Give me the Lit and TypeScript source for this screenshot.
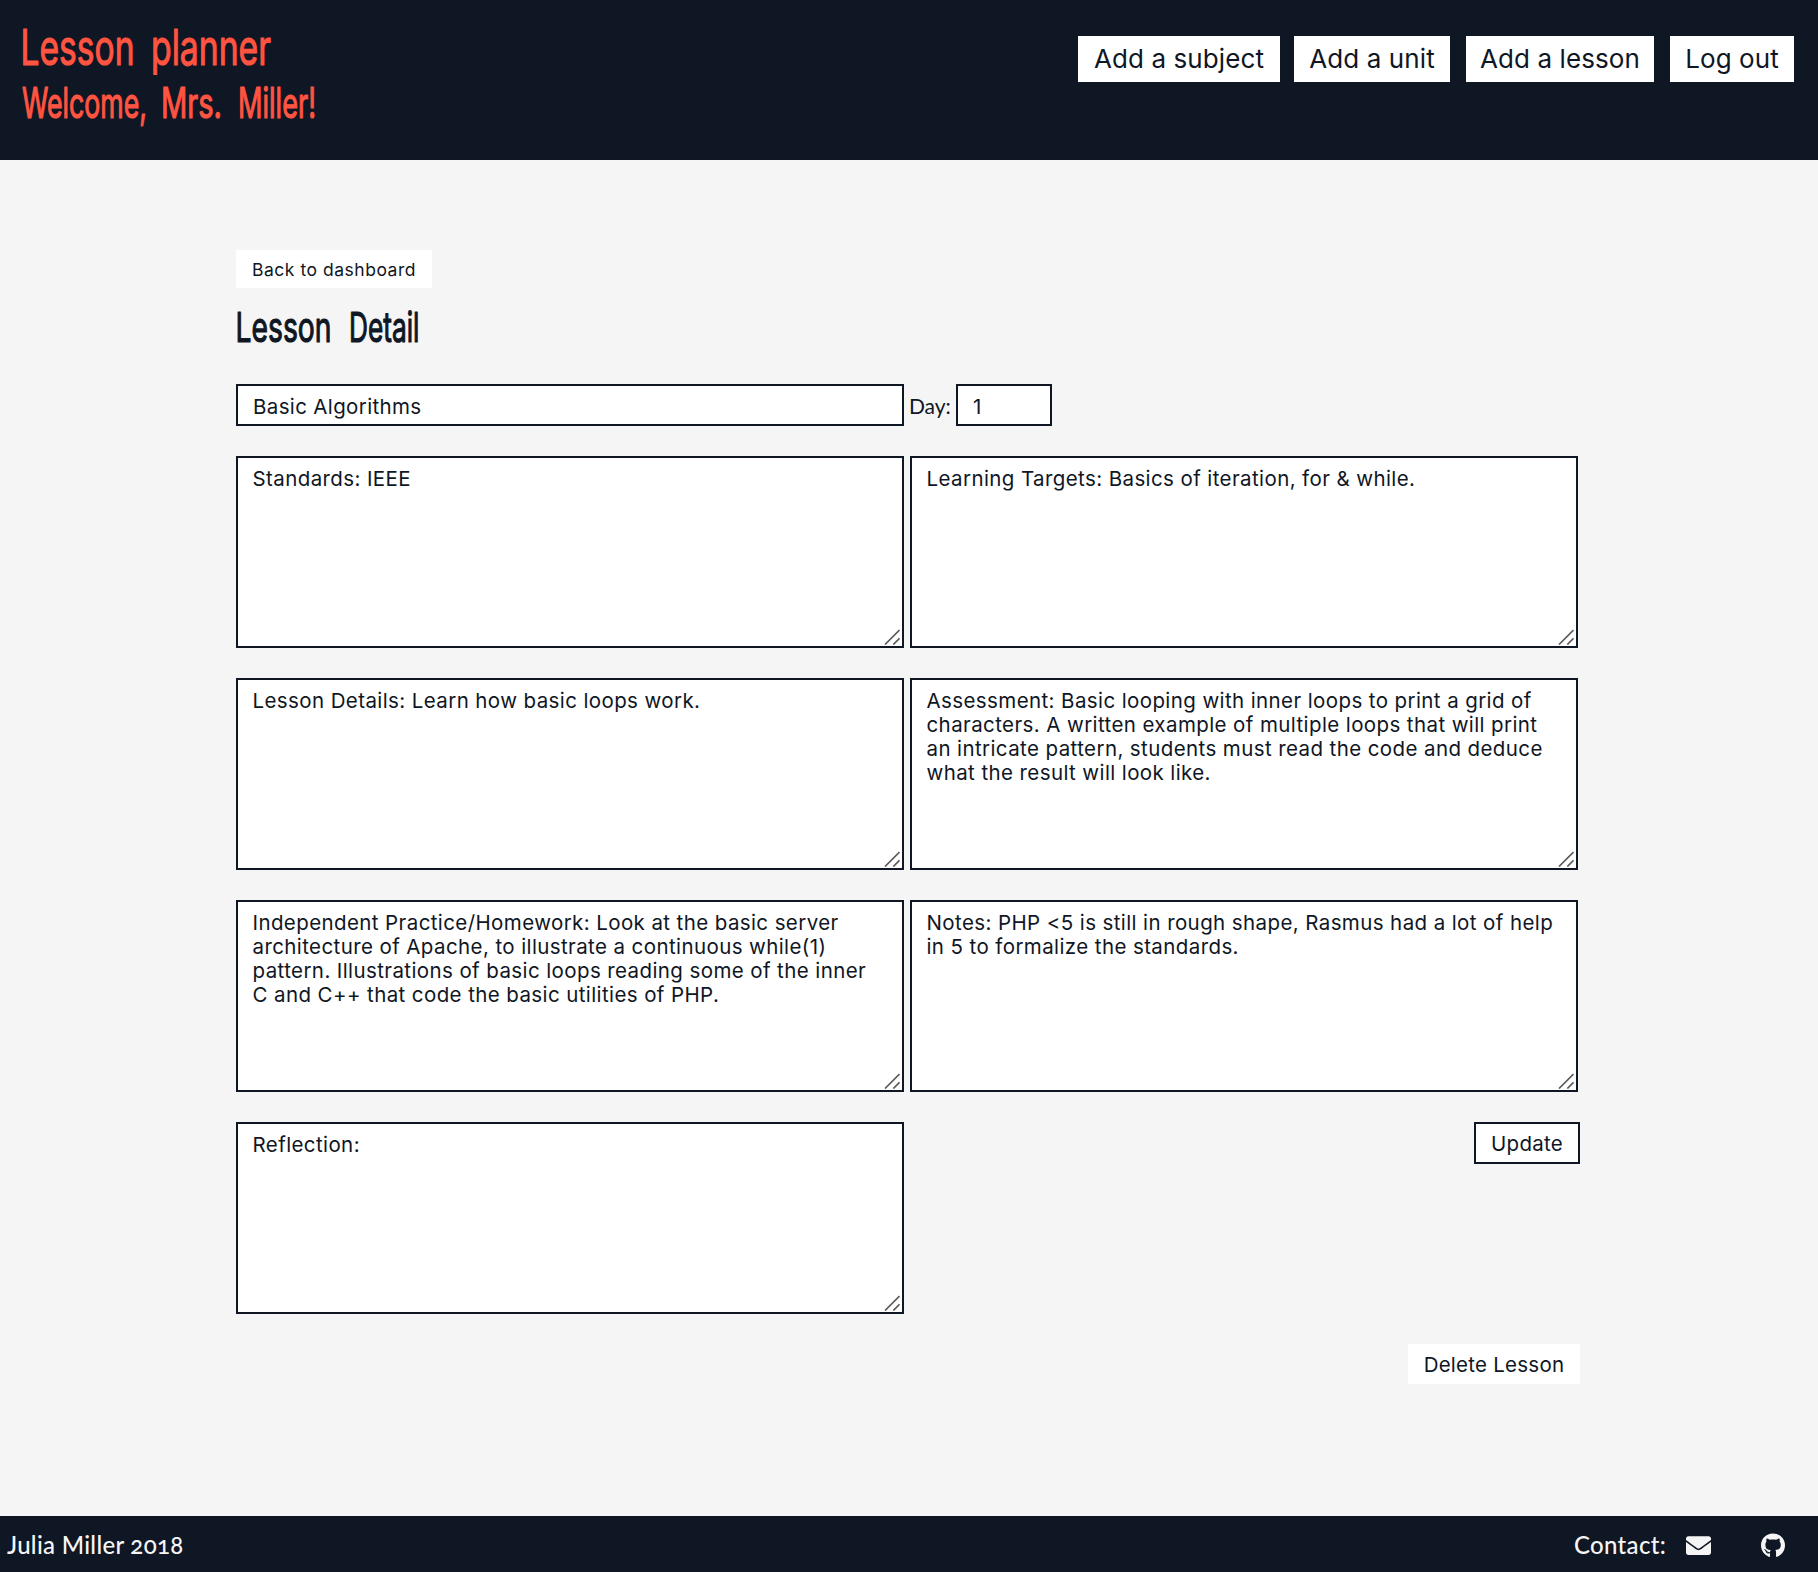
import { LitElement, html, svg, css } from "lit";
import { customElement, property } from "lit/decorators.js";

interface Word {
  text: string;
  x: number;
  width: number;
}

const DISPLAY_FAMILY = `Inter, "Liberation Sans", sans-serif`;
const ruler = document.createElement("canvas").getContext("2d")!;

/** Natural width of a word in the display face. */
function naturalWidth(text: string, size: number): number {
  ruler.font = `400 ${size}px ${DISPLAY_FAMILY}`;
  return ruler.measureText(text).width;
}

/** A line of tall, tightly set display lettering, spaced word by word. */
@customElement("display-text")
class DisplayText extends LitElement {
  static styles = css`
    :host { display: block; }
    svg { display: block; overflow: visible; }
    text {
      font-family: Inter, "Liberation Sans", sans-serif;
      font-weight: 400;
      fill: currentColor;
      stroke: currentColor;
      stroke-width: 1px;
      stroke-linejoin: round;
      vector-effect: non-scaling-stroke;
    }
  `;
  @property({ attribute: false }) words: Word[] = [];
  @property({ type: Number }) size = 40;
  @property({ type: Number }) height = 40;
  @property({ type: Number }) baseline = 36;

  render() {
    return html`<svg width="320" height=${this.height}>
      ${this.words.map((w) => {
        const ratio = w.width / naturalWidth(w.text, this.size);
        return svg`<text transform="translate(${w.x} ${this.baseline}) scale(${ratio} 1)"
          font-size=${this.size}>${w.text}</text>`;
      })}
    </svg>`;
  }
}

/** Multi-line field with a resize grip in its corner. */
@customElement("note-field")
class NoteField extends LitElement {
  static styles = css`
    :host { display: block; position: relative; width: 668px; height: 192px; }
    textarea {
      display: block;
      box-sizing: border-box;
      width: 100%;
      height: 100%;
      margin: 0;
      padding: 9px 14.500px 0;
      border: 2px solid #0f1624;
      border-radius: 0;
      outline: none;
      resize: none;
      overflow: hidden;
      background: #fff;
      color: #0f1624;
      font: 400 20.500px/24px Inter, "Liberation Sans", sans-serif;
      letter-spacing: 0.4px;
      white-space: pre;
    }
    .grip { position: absolute; right: 4px; bottom: 3px; }
  `;
  @property() value = "";

  render() {
    return html`<textarea .value=${this.value}></textarea>
      <svg class="grip" width="16" height="16" stroke="#5c5c5c" stroke-width="1.7">
        <path d="M1 15.5 15.5 1M9.3 15.5 15.5 9.3" fill="none" />
      </svg>`;
  }
}

const NAV = [
  { label: "Add a subject", width: 202, gap: 14 },
  { label: "Add a unit", width: 156, gap: 16 },
  { label: "Add a lesson", width: 188, gap: 16 },
  { label: "Log out", width: 124, gap: 0 },
];

const NOTES = [
  "Standards: IEEE",
  "Learning Targets: Basics of iteration, for & while.",
  "Lesson Details: Learn how basic loops work.",
  "Assessment: Basic looping with inner loops to print a grid of\ncharacters. A written example of multiple loops that will print\nan intricate pattern, students must read the code and deduce\nwhat the result will look like.",
  "Independent Practice/Homework: Look at the basic server\narchitecture of Apache, to illustrate a continuous while(1)\npattern. Illustrations of basic loops reading some of the inner\nC and C++ that code the basic utilities of PHP.",
  "Notes: PHP <5 is still in rough shape, Rasmus had a lot of help\nin 5 to formalize the standards.",
  "Reflection:",
];

@customElement("app-root")
class AppRoot extends LitElement {
  static styles = css`
    :host {
      display: flex;
      flex-direction: column;
      height: 1572px;
      background: #f5f5f5;
      color: #0f1624;
      font-family: Inter, "Liberation Sans", sans-serif;
    }
    * { box-sizing: border-box; }
    header {
      display: flex;
      justify-content: space-between;
      flex: none;
      height: 160px;
      padding: 22px 24px 0 22px;
      background: #0f1624;
    }
    .brand { color: #ff5441; }
    nav { display: flex; padding-top: 14px; }
    button {
      display: block;
      flex: none;
      margin: 0;
      padding: 0;
      border: 0;
      border-radius: 0;
      background: #fff;
      color: #0f1624;
      font-family: inherit;
      text-align: center;
      white-space: nowrap;
    }
    .nav-button { height: 46px; font-size: 26px; line-height: 46px; letter-spacing: 0.1px; }
    main { flex: 1; width: 1344px; margin-left: 236px; padding-top: 90px; }
    .back {
      width: 196px;
      height: 38px;
      padding-top: 1px;
      font-size: 17.500px;
      line-height: 37px;
      letter-spacing: 0.52px;
    }
    .title { margin-top: 16px; }
    .summary { display: flex; align-items: center; height: 42px; margin-top: 30px; }
    input {
      height: 42px;
      margin: 0;
      padding: 2px 15px 0;
      border: 2px solid #0f1624;
      border-radius: 0;
      outline: none;
      background: #fff;
      color: #0f1624;
      font: 400 20.500px Inter, "Liberation Sans", sans-serif;
      letter-spacing: 0.36px;
    }
    .name { width: 668px; }
    .day { width: 96px; }
    label {
      width: 52px;
      padding: 1px 0 0 5px;
      font: 400 21px/42px Lato, sans-serif;
      letter-spacing: -0.1px;
    }
    .notes { display: grid; grid-template-columns: 668px 670px; gap: 30px 6px; margin-top: 30px; }
    .update {
      justify-self: end;
      width: 106px;
      height: 42px;
      padding-top: 1px;
      border: 2px solid #0f1624;
      font-size: 20.500px;
      line-height: 38px;
      letter-spacing: 0.25px;
    }
    .delete {
      width: 172px;
      height: 40px;
      padding-top: 1px;
      margin: 30px 0 0 auto;
      font-size: 20.500px;
      line-height: 39px;
      letter-spacing: 0.25px;
    }
    footer {
      display: flex;
      align-items: center;
      flex: none;
      height: 56px;
      padding: 2px 33px 0 7px;
      background: #0f1624;
      color: #f5f5f5;
      font: 500 24px/54px Lato, sans-serif;
      font-variant-numeric: oldstyle-nums;
    }
    .author { letter-spacing: 0.3px; }
    .contact { margin-left: auto; letter-spacing: 0.3px; }
    .mail { margin-left: 20px; }
    .github { margin-left: 50px; }
  `;

  render() {
    return html`
      <header>
        <div class="brand">
          <display-text .size=${49} .height=${61} .baseline=${42.5}
            .words=${[{ text: "Lesson", x: -1.5, width: 114 }, { text: "planner", x: 129, width: 120 }]}></display-text>
          <display-text .size=${42.5} .height=${50} .baseline=${35}
            .words=${[{ text: "Welcome,", x: 0, width: 125 }, { text: "Mrs.", x: 139, width: 61 }, { text: "Miller!", x: 216, width: 78 }]}></display-text>
        </div>
        <nav>
          ${NAV.map((n) => html`<button class="nav-button" style="width:${n.width}px;margin-right:${n.gap}px">${n.label}</button>`)}
        </nav>
      </header>
      <main>
        <button class="back">Back to dashboard</button>
        <display-text class="title" .size=${41.5} .height=${50} .baseline=${38}
          .words=${[{ text: "Lesson", x: -0.5, width: 96 }, { text: "Detail", x: 113, width: 70.5 }]}></display-text>
        <div class="summary">
          <input class="name" .value=${"Basic Algorithms"} />
          <label>Day:</label>
          <input class="day" .value=${"1"} />
        </div>
        <div class="notes">
          ${NOTES.map((n) => html`<note-field .value=${n}></note-field>`)}
          <button class="update">Update</button>
        </div>
        <button class="delete">Delete Lesson</button>
      </main>
      <footer>
        <span class="author">Julia Miller 2018</span>
        <span class="contact">Contact:</span>
        <svg class="mail" width="25" height="25" viewBox="0 0 512 512" fill="currentColor">
          <path d="M502.3 190.8c3.900-3.100 9.700-.2 9.700 4.700V400c0 26.500-21.500 48-48 48H48c-26.500 0-48-21.500-48-48V195.600c0-5 5.700-7.800 9.700-4.700 22.400 17.400 52.100 39.500 154.100 113.600 21.100 15.400 56.700 47.800 92.200 47.600 35.700.3 72-32.800 92.300-47.600 102-74.100 131.600-96.300 154-113.700zM256 320c23.200.4 56.600-29.200 73.400-41.400 132.700-96.300 142.800-104.700 173.400-128.700 5.800-4.500 9.200-11.500 9.200-18.900v-19c0-26.500-21.500-48-48-48H48c-26.500 0-48 21.500-48 48v19c0 7.400 3.400 14.300 9.200 18.900 30.600 23.900 40.700 32.400 173.400 128.700 16.800 12.200 50.200 41.800 73.400 41.400z" />
        </svg>
        <svg class="github" width="24" height="25" viewBox="0 0 496 512" fill="currentColor">
          <path d="M165.900 397.400c0 2-2.300 3.600-5.200 3.600-3.300.3-5.600-1.300-5.600-3.600 0-2 2.300-3.600 5.200-3.600 3-.3 5.600 1.300 5.600 3.600zm-31.100-4.500c-.7 2 1.300 4.300 4.300 4.900 2.600 1 5.600 0 6.200-2s-1.300-4.300-4.300-5.200c-2.600-.7-5.500.3-6.200 2.300zm44.200-1.700c-2.900.7-4.900 2.600-4.600 4.900.3 2 2.900 3.300 5.900 2.600 2.900-.7 4.900-2.600 4.600-4.600-.3-1.900-3-3.200-5.900-2.900zM244.800 8C106.100 8 0 113.300 0 252c0 110.900 69.800 205.800 169.500 239.200 12.800 2.300 17.300-5.600 17.300-12.100 0-6.200-.3-40.400-.3-61.400 0 0-70 15-84.700-29.800 0 0-11.400-29.100-27.800-36.600 0 0-22.900-15.700 1.600-15.400 0 0 24.900 2 38.600 25.800 21.900 38.600 58.600 27.500 72.900 20.900 2.300-16 8.800-27.100 16-33.700-55.900-6.200-112.300-14.300-112.300-110.500 0-27.500 7.600-41.300 23.600-58.900-2.600-6.500-11.100-33.300 2.600-67.900 20.900-6.500 69 27 69 27 20-5.600 41.500-8.500 62.800-8.500s42.800 2.900 62.800 8.500c0 0 48.100-33.600 69-27 13.700 34.700 5.200 61.400 2.600 67.900 16 17.700 25.800 31.500 25.800 58.900 0 96.500-58.900 104.200-114.800 110.500 9.200 7.900 17 22.900 17 46.400 0 33.700-.3 75.400-.3 83.600 0 6.500 4.600 14.400 17.300 12.100C428.200 457.800 496 362.900 496 252 496 113.300 383.500 8 244.800 8z" />
        </svg>
      </footer>
    `;
  }
}
